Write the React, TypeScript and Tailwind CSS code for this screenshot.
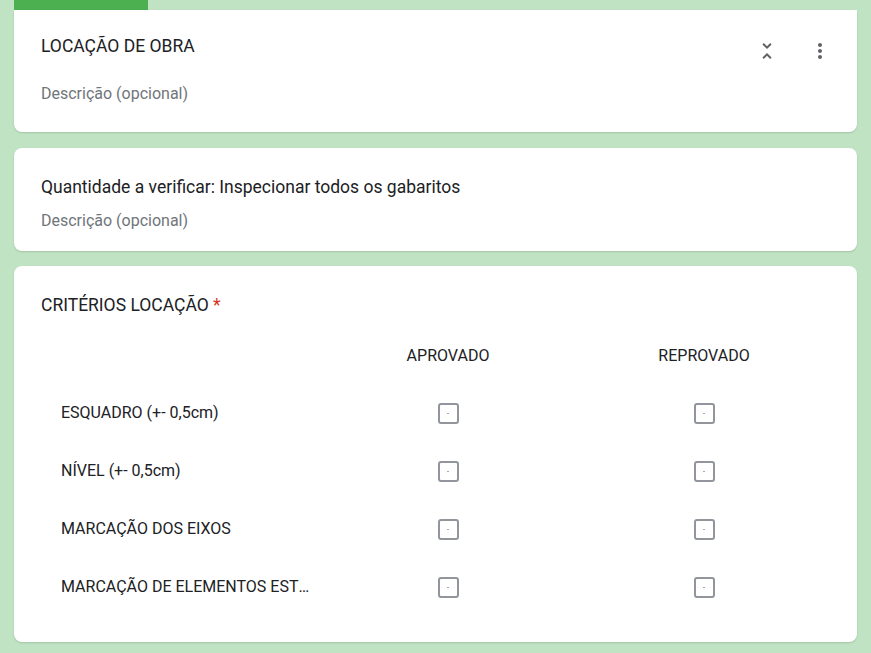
import React from 'react';

const rows = [
  'ESQUADRO (+- 0,5cm)',
  'NÍVEL (+- 0,5cm)',
  'MARCAÇÃO DOS EIXOS',
  'MARCAÇÃO DE ELEMENTOS ESTRUTURAIS',
];

const Box: React.FC = () => (
  <div className="w-[21px] h-[21px] rounded-[3px] border-2 border-[#92969c] flex items-center justify-center">
    <div className="w-[2px] h-[1px] bg-[#a8abb0]" />
  </div>
);

const App: React.FC = () => {
  return (
    <div
      className="w-[871px] h-[653px] overflow-hidden bg-[#c0e4c3] px-[14px] text-[#202124]"
      style={{ fontFamily: 'Roboto, "Noto Sans", Arial, sans-serif' }}
    >
      <div className="w-[134px] h-[10px] bg-[#4caf50]" />

      {/* section header */}
      <div className="bg-white rounded-b-lg shadow-[0_1px_2px_rgba(0,0,0,0.15)] h-[122px] pl-[27px] pr-[25px] pt-[23px] flex justify-between">
        <div className="flex flex-col">
          <div className="text-[17.5px] leading-[26px]">LOCAÇÃO DE OBRA</div>
          <div className="mt-[24px] text-[16px] leading-[22px] text-[#70757a]">Descrição (opcional)</div>
        </div>
        <div className="flex gap-[29px] mt-[6px] h-[24px] text-[#5f6368]">
          <svg width="24" height="24" viewBox="0 0 24 24" fill="currentColor">
            <path d="M7.41 18.59 8.83 20 12 16.83 15.17 20l1.41-1.41L12 14l-4.59 4.59zm9.18-13.18L15.17 4 12 7.17 8.83 4 7.41 5.41 12 10l4.59-4.59z" />
          </svg>
          <svg width="24" height="24" viewBox="0 0 24 24" fill="currentColor">
            <path d="M12 8c1.1 0 2-.9 2-2s-.9-2-2-2-2 .9-2 2 .9 2 2 2zm0 2c-1.1 0-2 .9-2 2s.9 2 2 2 2-.9 2-2-.9-2-2-2zm0 6c-1.1 0-2 .9-2 2s.9 2 2 2 2-.9 2-2-.9-2-2-2z" />
          </svg>
        </div>
      </div>

      {/* text item */}
      <div className="mt-[16px] bg-white rounded-lg shadow-[0_1px_2px_rgba(0,0,0,0.15)] h-[103px] px-[27px] pt-[26px]">
        <div className="text-[17.5px] leading-[26px]">Quantidade a verificar: Inspecionar todos os gabaritos</div>
        <div className="mt-[10px] text-[16px] leading-[22px] text-[#70757a]">Descrição (opcional)</div>
      </div>

      {/* grid question */}
      <div className="mt-[15px] bg-white rounded-lg shadow-[0_1px_2px_rgba(0,0,0,0.15)] h-[376px] px-[27px] pt-[26px]">
        <div className="text-[17.5px] leading-[26px]">
          CRITÉRIOS LOCAÇÃO <span className="text-[#d93025]">*</span>
        </div>
        <div className="mt-[10px] grid grid-cols-[279px_256px_256px]">
          <div className="h-[56px]" />
          <div className="h-[56px] flex items-center justify-center text-[16px]">APROVADO</div>
          <div className="h-[56px] flex items-center justify-center text-[16px]">REPROVADO</div>
          {rows.map((r) => (
            <React.Fragment key={r}>
              <div className="h-[58px] flex items-center pl-[20px] pr-[10px] text-[16px] min-w-0">
                <span className="truncate">{r}</span>
              </div>
              <div className="h-[58px] flex items-center justify-center">
                <Box />
              </div>
              <div className="h-[58px] flex items-center justify-center">
                <Box />
              </div>
            </React.Fragment>
          ))}
        </div>
      </div>
    </div>
  );
};

export default App;
